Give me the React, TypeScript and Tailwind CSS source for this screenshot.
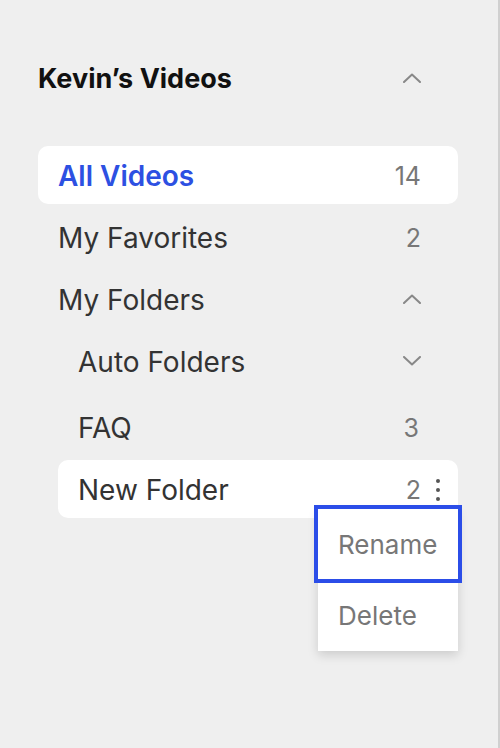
import React from "react";

const ChevronUp = () => (
  <svg width="18" height="10" viewBox="0 0 18 10" fill="none" className="block">
    <path d="M1 9 L9 1.5 L17 9" stroke="#888888" strokeWidth="2" strokeLinecap="round" strokeLinejoin="round" />
  </svg>
);
const ChevronDown = () => (
  <svg width="18" height="10" viewBox="0 0 18 10" fill="none" className="block">
    <path d="M1 1 L9 8.5 L17 1" stroke="#888888" strokeWidth="2" strokeLinecap="round" strokeLinejoin="round" />
  </svg>
);

export default function App() {
  return (
    <div
      className="w-[500px] h-[748px] bg-[#efefef] flex border-r-2 border-[#d0d0d0] text-[#333]"
      style={{ fontFamily: "Inter, 'Noto Sans', sans-serif" }}
    >
      <div className="w-[420px] ml-[38px] flex flex-col">
        <div className="h-[40px] mt-[58px] flex items-center justify-between pr-[37px]">
          <span className="text-[27px] leading-none font-bold text-[#111] pt-[1px]">Kevin’s Videos</span>
          <ChevronUp />
        </div>
        <div className="mt-[48px] flex flex-col gap-[4px]">
          <div className="h-[58px] bg-white rounded-[10px] flex items-center justify-between pl-[20px] pr-[37px]">
            <span className="text-[28px] leading-none font-semibold text-[#2d50e2] pt-[2px]">All Videos</span>
            <span className="text-[25px] leading-none text-[#777] pt-[2px]">14</span>
          </div>
          <div className="h-[58px] flex items-center justify-between pl-[20px] pr-[37px]">
            <span className="text-[28px] leading-none pt-[2px]">My Favorites</span>
            <span className="text-[25px] leading-none text-[#777] pt-[2px]">2</span>
          </div>
          <div className="h-[58px] flex items-center justify-between pl-[20px] pr-[37px]">
            <span className="text-[28px] leading-none pt-[2px]">My Folders</span>
            <ChevronUp />
          </div>
          <div className="pl-[20px] flex flex-col">
            <div className="h-[58px] flex items-center justify-between pl-[20px] pr-[37px]">
              <span className="text-[28px] leading-none pt-[2px]">Auto Folders</span>
              <ChevronDown />
            </div>
            <div className="h-[58px] mt-[8px] flex items-center justify-between pl-[20px] pr-[39px]">
              <span className="text-[28px] leading-none pt-[2px]">FAQ</span>
              <span className="text-[25px] leading-none text-[#777] pt-[2px]">3</span>
            </div>
            <div className="relative h-[58px] mt-[4px] bg-white rounded-[10px] flex items-center justify-between pl-[20px] pr-[18px]">
              <span className="text-[28px] leading-none pt-[2px]">New Folder</span>
              <div className="flex items-center gap-[15px]">
                <span className="text-[25px] leading-none text-[#777] pt-[2px]">2</span>
                <div className="flex flex-col gap-[5px] pt-[2px]">
                  <span className="w-[4px] h-[4px] rounded-full bg-[#555]" />
                  <span className="w-[4px] h-[4px] rounded-full bg-[#555]" />
                  <span className="w-[4px] h-[4px] rounded-full bg-[#555]" />
                </div>
              </div>
              <div className="absolute right-0 top-[49px] w-[140px] bg-white shadow-[0_4px_10px_rgba(0,0,0,0.15)] flex flex-col">
                <div className="h-[70px] flex items-center pl-[20px] outline-4 outline-[#2b4de8] outline-solid">
                  <span className="text-[26px] leading-none text-[#777] pt-[2px]">Rename</span>
                </div>
                <div className="h-[72px] flex items-center pl-[20px]">
                  <span className="text-[26px] leading-none text-[#777] pt-[2px]">Delete</span>
                </div>
              </div>
            </div>
          </div>
        </div>
      </div>
    </div>
  );
}
